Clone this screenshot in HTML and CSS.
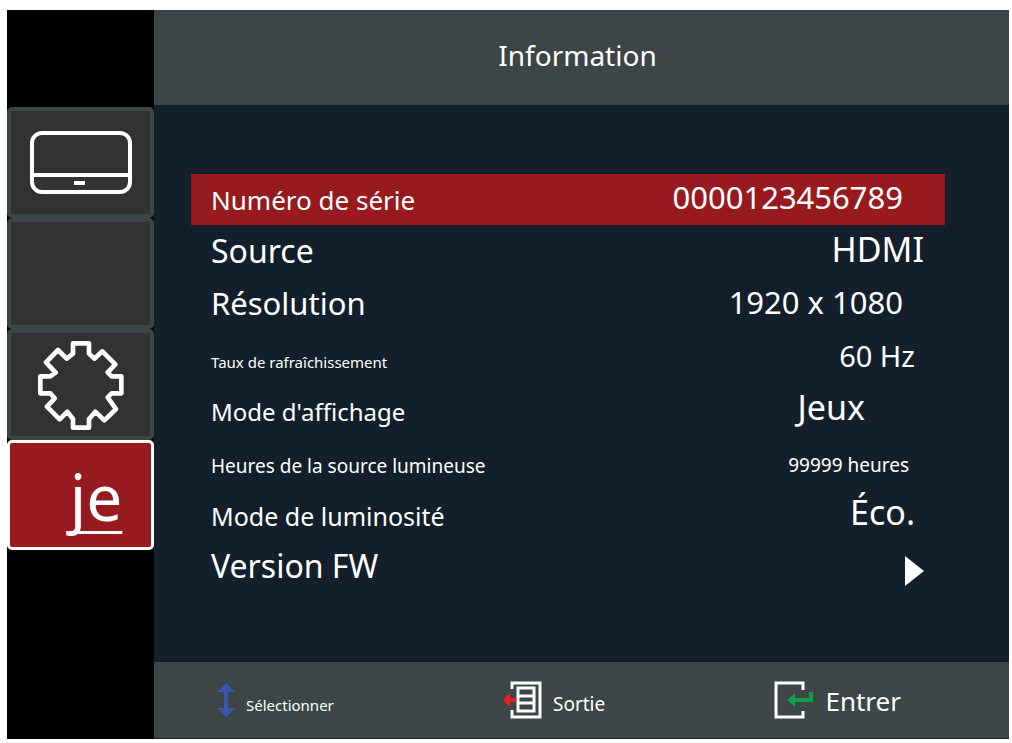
FILE: index.html
```html
<!DOCTYPE html>
<html lang="fr">
<head>
  <meta charset="UTF-8">
  <meta name="viewport" content="width=device-width, initial-scale=1">
  <title>Information</title>
  <link rel="stylesheet" href="styles.css">
</head>
<body>
  <div class="osd">

    <!-- Menu tabs -->
    <nav class="tabs">
      <button class="tab" type="button" aria-label="Image">
        <svg width="102" height="63" viewBox="0 0 102 63" fill="none" stroke="#fff" stroke-width="4">
          <rect x="2" y="2" width="98" height="59" rx="10"/>
          <path d="M2 44H100"/>
          <path d="M44 52H55"/>
        </svg>
      </button>
      <button class="tab" type="button" aria-label="Audio"></button>
      <button class="tab tab-gear" type="button" aria-label="Configuration">
        <svg width="86" height="89" viewBox="113 394 258 267" fill="none" stroke="#fff" stroke-width="14" stroke-linejoin="round">
          <path d="M218 401H266V432L282 447L306 425L345 464L322 488L334 500H363V551H334L322 563L347 598L312 632L285 606L266 628V654H218V628L201 606L178 629L140 591L163 566L150 551H120V500H150L166 489L137 458L173 421L199 447L218 432Z"/>
        </svg>
      </button>
      <button class="tab tab-info active" type="button"><span>je</span></button>
    </nav>

    <div class="panel">
      <header class="title">
        <h1>Information</h1>
      </header>

      <main class="content">
        <table class="info">
          <tbody>
            <tr class="selected">
              <th scope="row"><span class="size-m">Numéro de série</span></th>
              <td class="inset-l"><span class="size-l">0000123456789</span></td>
            </tr>
            <tr>
              <th scope="row"><span class="size-xl">Source</span></th>
              <td class="inset-s"><span class="size-xxl">HDMI</span></td>
            </tr>
            <tr>
              <th scope="row"><span class="size-l">Résolution</span></th>
              <td class="inset-l"><span class="size-l">1920 x 1080</span></td>
            </tr>
            <tr>
              <th scope="row"><span class="size-xs">Taux de rafraîchissement</span></th>
              <td class="inset-m"><span class="size-ml">60 Hz</span></td>
            </tr>
            <tr>
              <th scope="row"><span class="size-sm">Mode d'affichage</span></th>
              <td class="inset-xl"><span class="size-xxl">Jeux</span></td>
            </tr>
            <tr>
              <th scope="row"><span class="size-s">Heures de la source lumineuse</span></th>
              <td class="inset-ml"><span class="size-s">99999 heures</span></td>
            </tr>
            <tr>
              <th scope="row"><span class="size-smd">Mode de luminosité</span></th>
              <td class="inset-m"><span class="size-xxl">Éco.</span></td>
            </tr>
            <tr>
              <th scope="row"><span class="size-xl">Version FW</span></th>
              <td class="inset-s">
                <svg class="arrow" width="19" height="30" viewBox="0 0 19 30"><path d="M0 0L19 15L0 30Z" fill="#fff"/></svg>
              </td>
            </tr>
          </tbody>
        </table>
      </main>

      <!-- Key legend -->
      <footer class="keys">
        <div class="key">
          <svg width="18" height="34" viewBox="0 0 18 34" fill="#3b55ae">
            <path d="M9 0L18 9H11V25H18L9 34L0 25H7V9H0Z"/>
          </svg>
          <div class="key-label"><span class="size-xs">Sélectionner</span></div>
        </div>
        <div class="key">
          <svg width="39" height="38" viewBox="0 0 39 38" fill="none" stroke="#fff" stroke-width="3">
            <path d="M9 8V2H37V36H9V29"/>
            <path d="M15 7H31V30H15ZM15 15H31M15 22H31"/>
            <path d="M0 19L7 12V17H13V21H7V26Z" fill="#ec1c2b" stroke="none"/>
          </svg>
          <div class="key-label"><span class="size-s">Sortie</span></div>
        </div>
        <div class="key">
          <svg width="40" height="38" viewBox="0 0 40 38" fill="none" stroke="#fff" stroke-width="3">
            <path d="M29 9V2H2V36H29V30"/>
            <path d="M13 19L21 12V17H35V11H39V21H21V26Z" fill="#0f9d4e" stroke="none"/>
          </svg>
          <div class="key-label"><span class="size-m">Entrer</span></div>
        </div>
      </footer>
    </div>
  </div>
</body>
</html>
```
FILE: styles.css
```css
* {
  box-sizing: border-box;
}

body {
  margin: 0;
  padding: 10px 3px 4px 7px;
  background: #fff;
  color: #fff;
  font-family: "Noto Sans", sans-serif;
}

.osd {
  display: flex;
  min-height: calc(100vh - 14px);
  background: #131f2a;
}

/* Left column */
.tabs {
  display: flex;
  flex-direction: column;
  width: 147px;
  padding-top: 97px;
  background: #000;
}

.tab {
  display: flex;
  align-items: center;
  justify-content: center;
  height: 111px;
  padding: 0;
  border: 4px solid #3c4647;
  border-radius: 5px;
  background: #313332;
  color: #fff;
  font-family: inherit;
}

.tab-gear {
  padding-top: 2px;
}

.tab.active {
  height: 110px;
  border: 3px solid #fff;
  background: #971a1e;
}

.tab-info {
  padding: 3px 0 0 31px;
  font-size: 64px;
  line-height: 64px;
  text-decoration: underline;
  text-decoration-thickness: 3px;
  text-decoration-skip-ink: none;
  text-underline-offset: 10px;
}

/* Right side */
.panel {
  display: flex;
  flex: 1;
  flex-direction: column;
}

.title {
  display: flex;
  align-items: center;
  justify-content: center;
  height: 95px;
  padding: 0 8px 6px 0;
  background: #3d4546;
}

.title h1 {
  margin: 0;
  font-size: 28px;
  font-weight: 400;
}

.content {
  display: flex;
  flex: 1;
  padding: 69px 64px 67px 37px;
}

.info {
  width: 100%;
  border-collapse: separate;
  border-spacing: 0;
}

/* The cell font sets the baseline that every text size sits on */
.info th,
.info td {
  padding: 0;
  border-bottom: 2px solid transparent;
  background-clip: padding-box;
  font-size: 32px;
  font-weight: 400;
  line-height: 48px;
  vertical-align: top;
}

.info th {
  padding-left: 20px;
  text-align: left;
}

.info td {
  line-height: 45px;
  text-align: right;
}

.info span,
.key-label span {
  line-height: 1;
}

.selected th,
.selected td {
  background-color: #971a1e;
}

.info .inset-s { padding-right: 21px; }
.info .inset-m { padding-right: 30px; }
.info .inset-ml { padding-right: 36px; }
.info .inset-l { padding-right: 42px; }
.info .inset-xl { padding-right: 80px; }

.size-xs { font-size: 15px; }
.size-s { font-size: 19px; }
.size-sm { font-size: 24px; }
.size-smd { font-size: 25px; }
.size-m { font-size: 26px; }
.size-ml { font-size: 29px; }
.size-l { font-size: 31px; }
.size-xl { font-size: 32px; }
.size-xxl { font-size: 34px; }

.arrow {
  display: block;
  margin: 14px 0 0 auto;
}

/* Bottom bar */
.keys {
  display: flex;
  align-items: center;
  justify-content: space-between;
  height: 76px;
  margin-bottom: 1px;
  padding: 0 108px 0 63px;
  background: #3d4546;
}

.key {
  display: flex;
  align-items: center;
  gap: 11px;
}

.key-label {
  font-size: 28px;
  line-height: 48px;
}
```
